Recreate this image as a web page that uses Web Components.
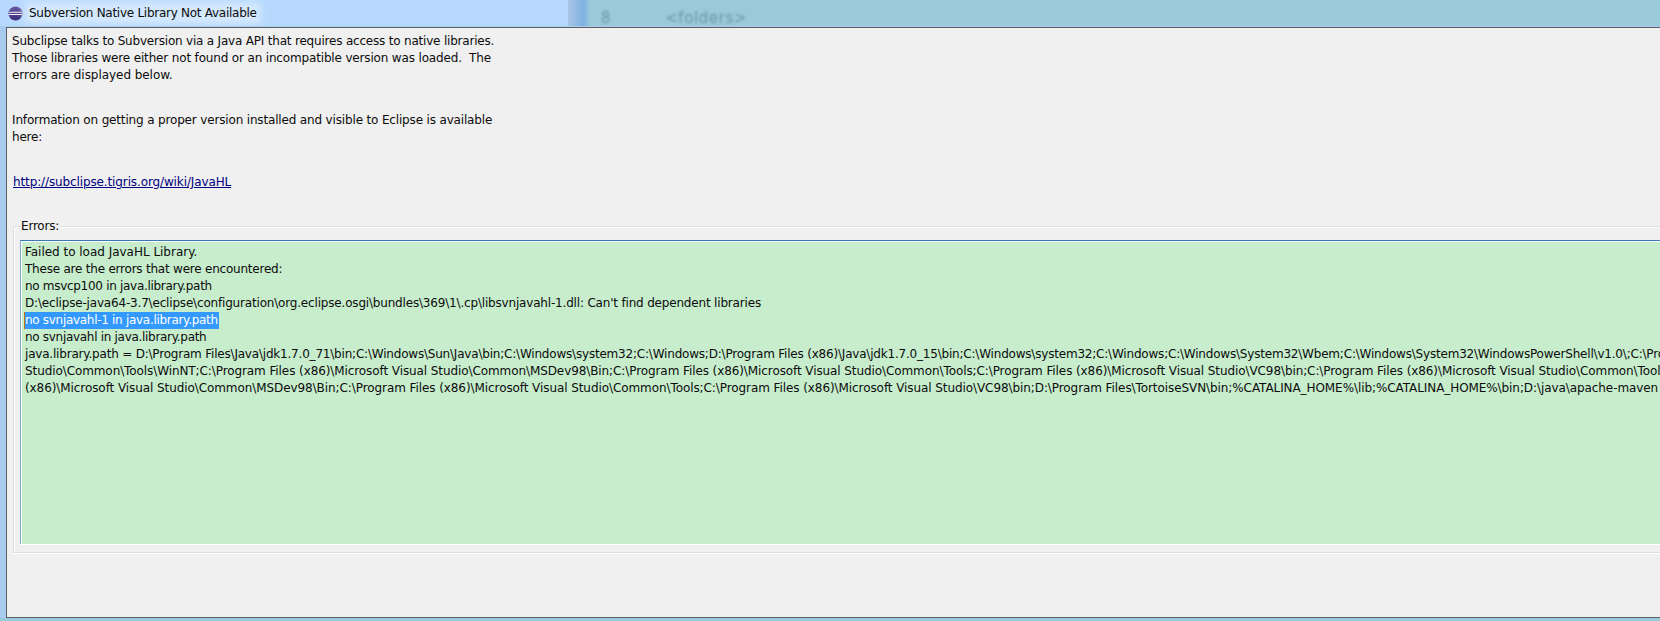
<!DOCTYPE html>
<html>
<head>
<meta charset="utf-8">
<title>Subversion Native Library Not Available</title>
<style>
  html, body { margin: 0; height: 100%; overflow: hidden; background: #9ac9d9; }
  body { font: 12px "DejaVu Sans", sans-serif; letter-spacing: -0.2px; color: #0c0c0c; }
  .wide { letter-spacing: -0.16px; }
  .wider { letter-spacing: -0.05px; }
</style>
</head>
<body>
<svn-dialog>
  <span slot="title">Subversion Native Library Not Available</span>
  <info-text>Subclipse talks to Subversion via a Java API that requires access to native libraries.
<span class="wide">Those libraries were either not found or an incompatible version was loaded.  The</span>
<span class="wider">errors are displayed below.</span></info-text>
  <info-text class="second"><span class="wide">Information on getting a proper version installed and visible to Eclipse is available</span>
here:</info-text>
  <info-link href="#">http://subclipse.tigris.org/wiki/JavaHL</info-link>
  <group-box label="Errors:">
    <error-log></error-log>
  </group-box>
</svn-dialog>

<script>
// Window frame: title bar, blurred desktop behind it, client area
class SvnDialog extends HTMLElement {
  constructor() {
    super();
    this.attachShadow({ mode: 'open' });
    this.shadowRoot.innerHTML = `
      <style>
        :host { display: flex; flex-direction: column; width: 1660px; height: 621px; overflow: hidden; }
        .bar { display: flex; height: 26px; flex: none; }
        .caption {
          width: 568px; flex: none; display: flex; align-items: center; gap: 6px; padding-left: 8px; box-sizing: border-box;
          background: #b7d9fd; letter-spacing: -0.27px;
        }
        .caption .t { background: #d3e8fd; box-shadow: 0 0 7px 4px #d3e8fd; }
        .edge { width: 22px; flex: none; background: linear-gradient(90deg, #a9c5e6, #7fb0e2 70%, #9ac9d9); }
        .behind { flex: 1; background: #9ac9d9; display: flex; align-items: center; gap: 54px; padding: 9px 0 0 11px; color: #6a98a8; }
        .behind b { font-weight: normal; filter: blur(1.3px); font-size: 15px; letter-spacing: .6px; }
        .frame { flex: none; height: 592px; display: flex; background: #a9cbee; }
        .client {
          margin: 1px 0 0 6px; flex: 1; box-sizing: border-box; min-width: 0;
          background: #f0f0f0; border-top: 1px solid #5a6068; border-left: 1px solid #5a6068; border-bottom: 1px solid #5a6068;
          padding: 5px 0 0 5px;
          display: flex; flex-direction: column;
        }
        svg { flex: none; }
      </style>
      <div class="bar">
        <div class="caption">
          <svg width="15" height="15" viewBox="0 0 15 15">
            <defs><linearGradient id="e" x1="0" y1="0" x2="0" y2="1"><stop offset="0" stop-color="#6a5aa4"/><stop offset="1" stop-color="#3a2a78"/></linearGradient></defs>
            <circle cx="7.5" cy="7.5" r="7" fill="url(#e)"/>
            <path d="M1 6.3h13M.6 8.5h13.8" stroke="#f3f0f8" stroke-width="1.1"/>
          </svg>
          <span class="t"><slot name="title"></slot></span>
        </div>
        <div class="edge"></div>
        <div class="behind"><b>8</b><b>&lt;folders&gt;</b></div>
      </div>
      <div class="frame"><div class="client"><slot></slot></div></div>`;
  }
}

class InfoText extends HTMLElement {
  constructor() {
    super();
    this.attachShadow({ mode: 'open' });
    this.shadowRoot.innerHTML = `<style>
        :host { display: block; line-height: 17px; }
        :host(.second) { margin-top: 28px; }
        div { white-space: pre; }
      </style><div><slot></slot></div>`;
  }
}

class InfoLink extends HTMLElement {
  constructor() {
    super();
    this.attachShadow({ mode: 'open' });
    const href = this.getAttribute('href') || '#';
    this.shadowRoot.innerHTML = `
      <style>
        :host { display: block; margin: 28px 0 0 1px; line-height: 17px; letter-spacing: -0.12px; }
        a { color: #000080; }
      </style>
      <a href="${href}"><slot></slot></a>`;
  }
}

// Etched group with its label sitting on the top edge
class GroupBox extends HTMLElement {
  constructor() {
    super();
    this.attachShadow({ mode: 'open' });
    const label = this.getAttribute('label') || '';
    this.shadowRoot.innerHTML = `
      <style>
        :host { display: block; margin: 35px 0 0 1px; position: relative; }
        .box {
          height: 327px; box-sizing: border-box; margin-right: -2px;
          border: 1px solid #d5dfe5; border-right: 0; border-radius: 2px 0 0 2px; box-shadow: inset 1px 1px 0 #fff, 0 1px 0 #fff;
          padding: 13px 0 8px 6px; display: flex;
        }
        .label {
          position: absolute; left: 7px; top: -8px; padding: 0 1px; background: #f0f0f0;
          line-height: 17px;
        }
      </style>
      <div class="label">${label}</div>
      <div class="box"><slot></slot></div>`;
  }
}

// Read-only text area holding the long library paths
class ErrorLog extends HTMLElement {
  constructor() {
    super();
    this.attachShadow({ mode: 'open' });
    // second value is the letter spacing that makes each line run as wide as in the dialog
    const lines = [
      ['Failed to load JavaHL Library.', -0.02],
      ['These are the errors that were encountered:', -0.22],
      ['no msvcp100 in java.library.path', -0.3],
      ["D:\\eclipse-java64-3.7\\eclipse\\configuration\\org.eclipse.osgi\\bundles\\369\\1\\.cp\\libsvnjavahl-1.dll: Can't find dependent libraries", -0.18],
      ['<mark>no svnjavahl-1 in java.library.path</mark>', -0.3],
      ['no svnjavahl in java.library.path', -0.3],
      ['java.library.path = D:\\Program Files\\Java\\jdk1.7.0_71\\bin;C:\\Windows\\Sun\\Java\\bin;C:\\Windows\\system32;C:\\Windows;D:\\Program Files (x86)\\Java\\jdk1.7.0_15\\bin;C:\\Windows\\system32;C:\\Windows;C:\\Windows\\System32\\Wbem;C:\\Windows\\System32\\WindowsPowerShell\\v1.0\\;C:\\Program Files', -0.2],
      ['Studio\\Common\\Tools\\WinNT;C:\\Program Files (x86)\\Microsoft Visual Studio\\Common\\MSDev98\\Bin;C:\\Program Files (x86)\\Microsoft Visual Studio\\Common\\Tools;C:\\Program Files (x86)\\Microsoft Visual Studio\\VC98\\bin;C:\\Program Files (x86)\\Microsoft Visual Studio\\Common\\Tools', -0.09],
      ['(x86)\\Microsoft Visual Studio\\Common\\MSDev98\\Bin;C:\\Program Files (x86)\\Microsoft Visual Studio\\Common\\Tools;C:\\Program Files (x86)\\Microsoft Visual Studio\\VC98\\bin;D:\\Program Files\\TortoiseSVN\\bin;%CATALINA_HOME%\\lib;%CATALINA_HOME%\\bin;D:\\java\\apache-maven', -0.08]
    ];
    this.shadowRoot.innerHTML = `<style>
        :host { display: block; flex: 1; min-width: 0; box-sizing: border-box; background: #c7edcc;
          border-top: 1px solid #3a7ab4; border-left: 1px solid #7fa9cf; box-shadow: inset 1px 1px 0 #fff, 0 1px 0 #fff;
          padding: 3px 0 0 4px; overflow: hidden; line-height: 17px; }
        mark { background: #3399ff; color: #fff; box-shadow: -1px 0 0 #c0701a; display: inline-block; padding-right: 1px; }
        div { height: 17px; white-space: pre; }
      </style>${lines.map(([t, ls]) => `<div style="letter-spacing:${ls}px">${t}</div>`).join('')}`;
  }
}

customElements.define('svn-dialog', SvnDialog);
customElements.define('info-text', InfoText);
customElements.define('info-link', InfoLink);
customElements.define('group-box', GroupBox);
customElements.define('error-log', ErrorLog);
</script>
</body>
</html>
